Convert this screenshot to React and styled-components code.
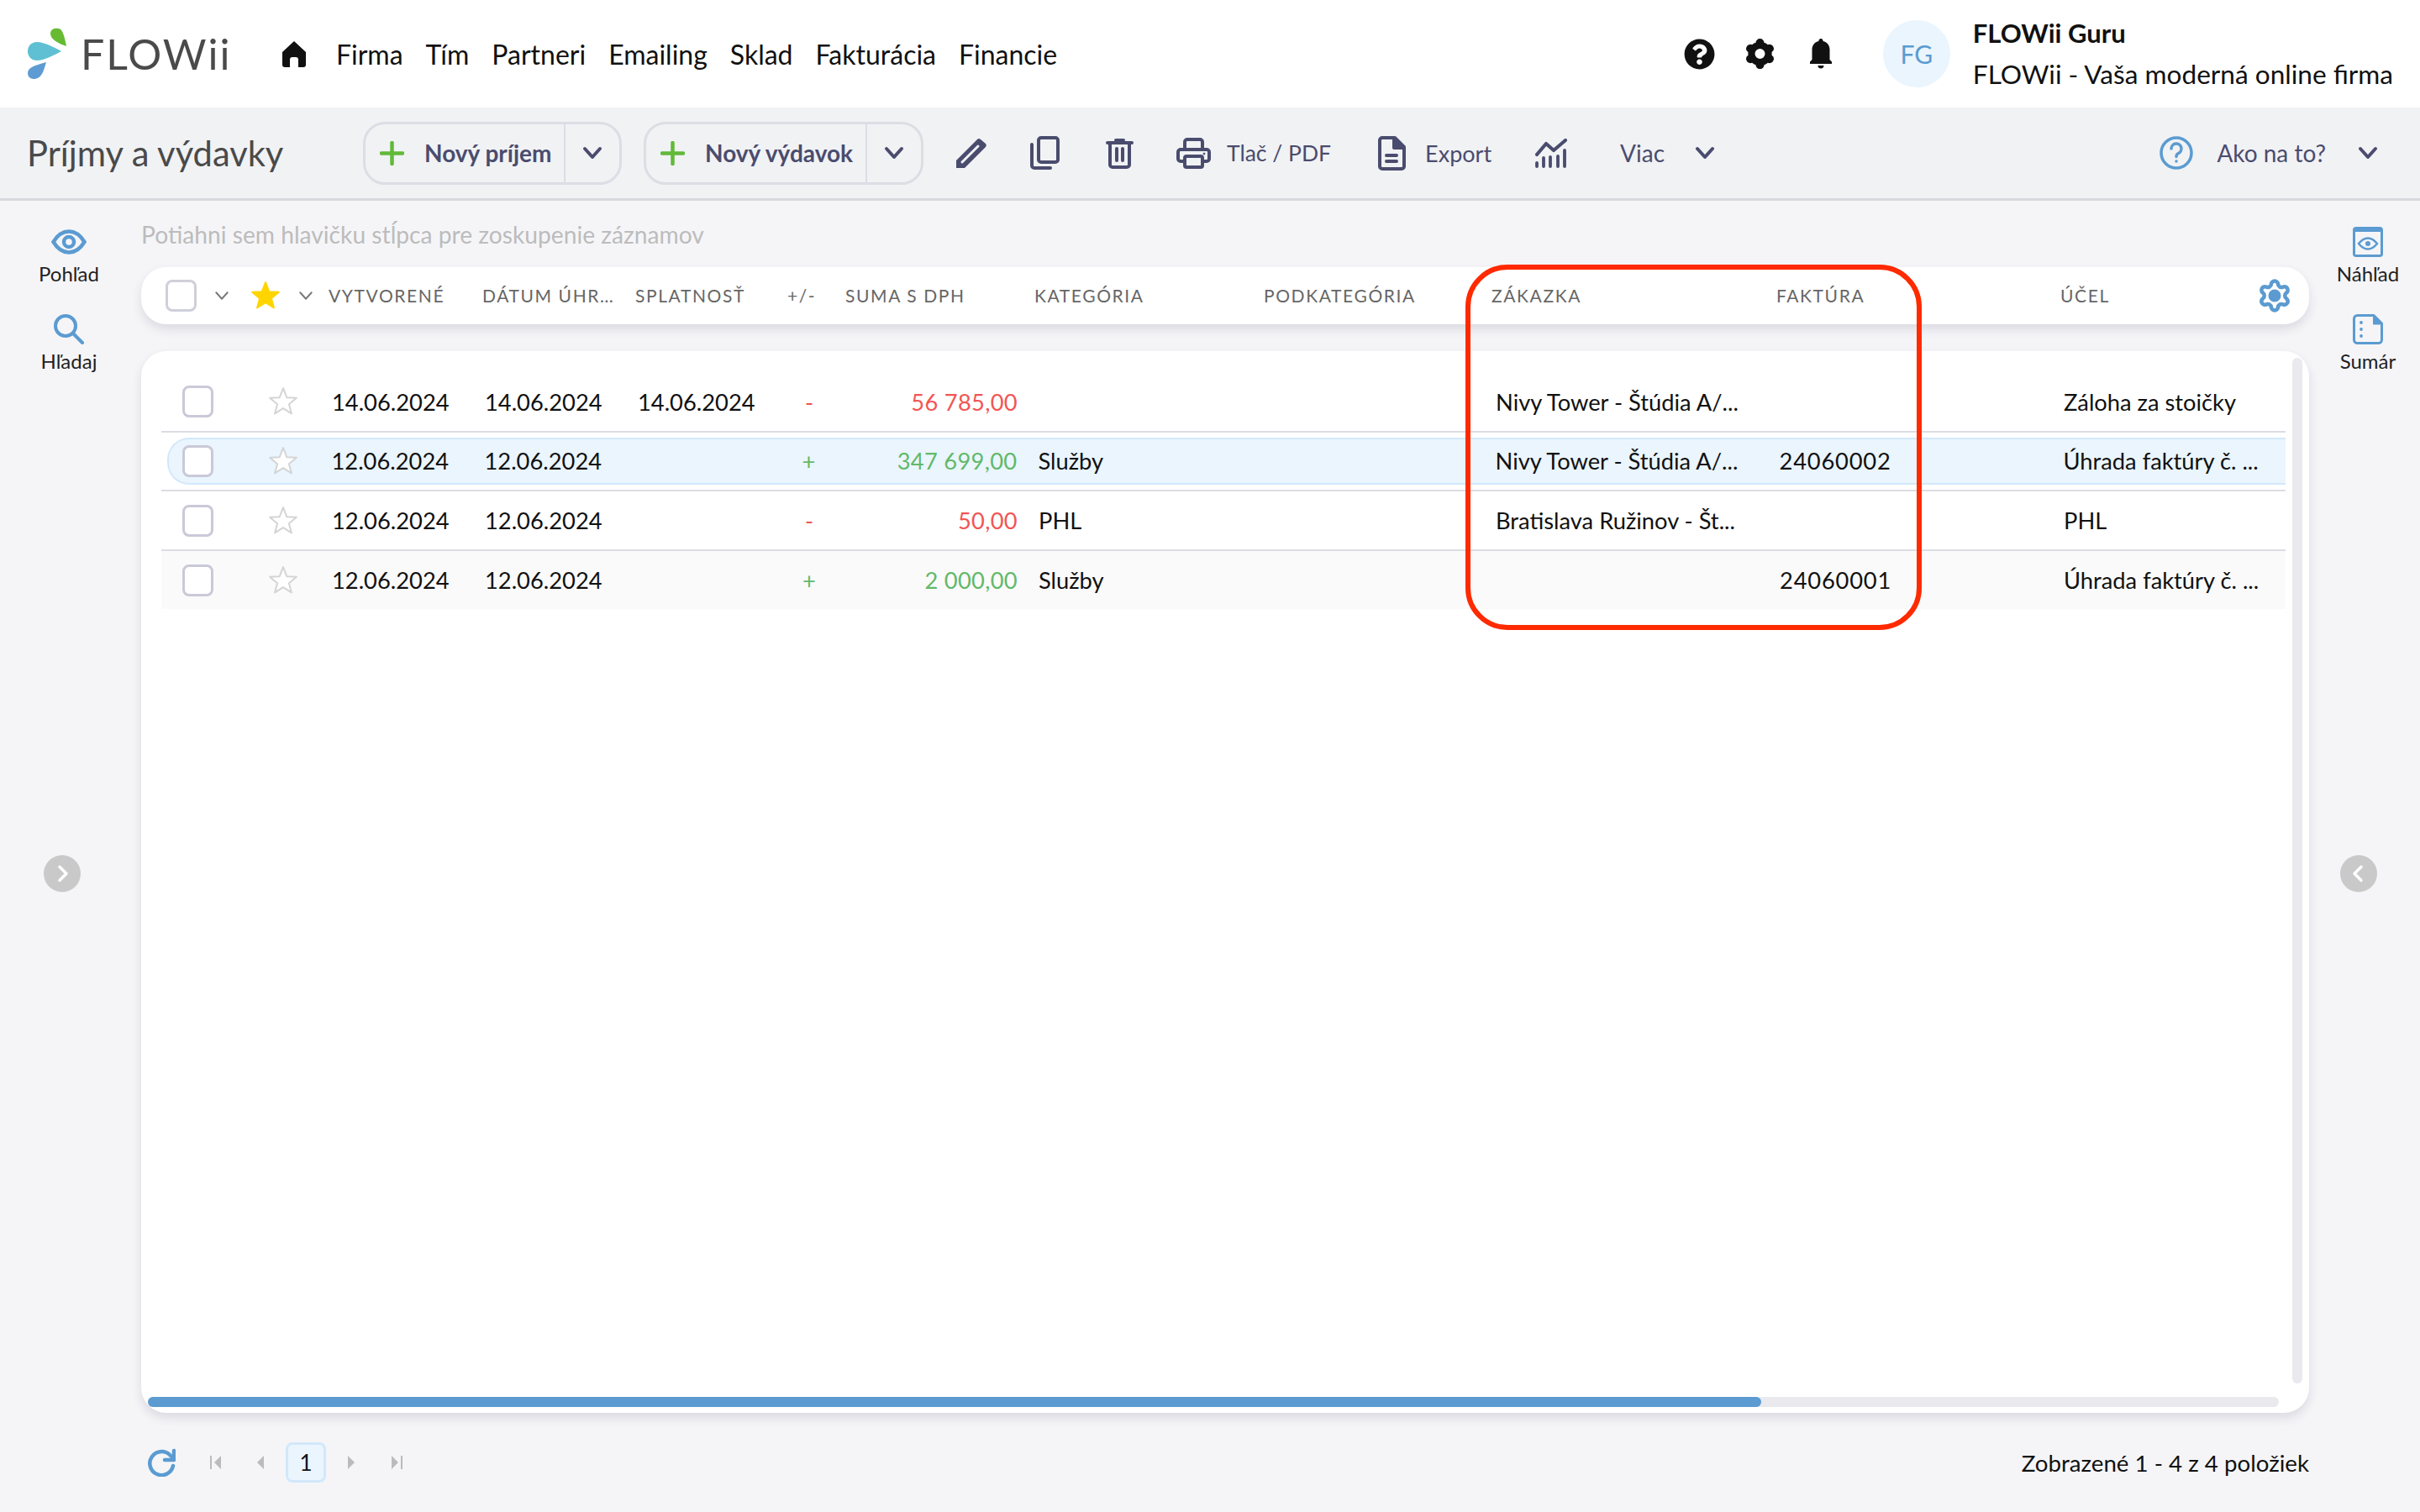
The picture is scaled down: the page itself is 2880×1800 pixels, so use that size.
import React from 'react'
import styled, { createGlobalStyle } from 'styled-components'
import { FaQuestionCircle } from 'react-icons/fa'
import { Settings } from 'lucide-react'

const INK = '#4a4c6e'
const BLUE = '#5b9bd1'

const Global = createGlobalStyle`
  html, body { margin: 0; padding: 0; background: #f5f5f8; }
  body { font-family: Lato, "Open Sans", sans-serif; color: #111; }
  * { box-sizing: border-box; }
  svg { display: block; }
`

const Page = styled.div`
  width: 2880px;
  height: 1800px;
  position: relative;
  overflow: hidden;
  display: flex;
  flex-direction: column;
`

/* top bar */
const TopBar = styled.header`
  height: 128px;
  background: #fff;
  display: flex;
  align-items: center;
  padding-right: 32px;
`
const Brand = styled.div`
  width: 335px;
  display: flex;
  align-items: center;
  padding-left: 33px;
`
const Wordmark = styled.span`
  font-size: 50px;
  font-weight: 400;
  letter-spacing: 2px;
  color: #4a4a4a;
  margin-left: 15px;
  line-height: 1;
`
const Nav = styled.nav`
  display: flex;
  align-items: center;
  gap: 27px;
  margin-left: 35px;
  font-size: 32px;
  color: #111;
`
const TopRight = styled.div`
  margin-left: auto;
  display: flex;
  align-items: center;
`
const TopIcon = styled.span`
  display: flex;
  font-size: 37px;
  color: #111;
  margin-left: ${p => p.$gap}px;
`
const Avatar = styled.div`
  width: 80px;
  height: 80px;
  border-radius: 50%;
  background: #eaf5fe;
  color: ${BLUE};
  font-size: 30px;
  display: flex;
  align-items: center;
  justify-content: center;
  margin-left: 60px;
  margin-right: 27px;
`
const UserBox = styled.div`
  display: flex;
  flex-direction: column;
  gap: 17px;
  font-size: 31.600px;
  line-height: 32px;
  margin-top: -2px;
`
const UserName = styled.div`
  font-weight: 700;
  font-size: 31px;
`

/* toolbar */
const Toolbar = styled.div`
  height: 111px;
  background: #f1f2f4;
  border-bottom: 3px solid #d8d9dd;
  display: flex;
  align-items: center;
  padding-right: 50px;
  color: ${INK};
  font-size: 28px;
`
const PageTitle = styled.h1`
  width: 432px;
  margin: 0;
  padding-left: 32px;
  font-size: 41.700px;
  font-weight: 400;
  color: #4a4a4a;
`
const SplitButton = styled.div`
  height: 75px;
  width: ${p => p.$width}px;
  margin-left: ${p => p.$gap || 0}px;
  border: 3px solid #dcdde5;
  border-radius: 26px;
  display: flex;
  align-items: center;
`
const SplitMain = styled.div`
  flex: 1;
  height: 100%;
  display: flex;
  align-items: center;
  gap: 24px;
  padding-left: 17px;
  font-weight: 700;
  font-size: 28px;
  color: ${INK};
`
const SplitArrow = styled.div`
  width: 66px;
  height: 100%;
  border-left: 2px solid #dcdde5;
  display: flex;
  align-items: center;
  justify-content: center;
`
const ToolItem = styled.div`
  display: flex;
  align-items: center;
  margin-left: ${p => p.$gap}px;
  font-size: ${p => p.$size || 28}px;
  ${p => p.$push && 'margin-left: auto;'}
`

/* main columns */
const Body = styled.div`
  flex: 1;
  display: grid;
  grid-template-columns: 168px 2580px 132px;
  min-height: 0;
`
const Rail = styled.aside`
  display: flex;
  flex-direction: column;
  align-items: center;
  padding-top: 31px;
  padding-left: ${p => p.$left || 0}px;
  padding-right: ${p => p.$right || 0}px;
`
const RailItem = styled.div`
  height: 104px;
  display: flex;
  flex-direction: column;
  align-items: center;
  font-size: 24px;
  line-height: 30px;
  color: #222;
`
const RailIcon = styled.div`
  height: 36px;
  margin-bottom: 5px;
  display: flex;
  align-items: center;
`
const RailToggle = styled.div`
  width: 44px;
  height: 44px;
  border-radius: 50%;
  background: #c9c9c9;
  display: flex;
  align-items: center;
  justify-content: center;
  margin-top: 540px;
  align-self: flex-start;
  margin-left: ${p => p.$offset}px;
`
const Center = styled.main`
  display: flex;
  flex-direction: column;
  padding-top: 20px;
  min-height: 0;
`
const GroupHint = styled.div`
  height: 40px;
  line-height: 40px;
  font-size: 28.200px;
  color: #bcbcbc;
  margin-bottom: 19px;
`
const HeadCard = styled.div`
  height: 68px;
  background: #fff;
  border-radius: 30px;
  box-shadow: 0 6px 12px rgba(60, 60, 90, 0.14);
  display: grid;
  grid-template-columns: 87px 43px 57px 36px 183px 182px 181px 69px 225px 273px 271px 339px 338px 234px 62px;
  align-items: center;
  margin-bottom: 32px;
`
const HeadCell = styled.div`
  font-size: 21px;
  letter-spacing: 1.600px;
  color: #666;
  white-space: nowrap;
  padding-left: ${p => p.$pad || 0}px;
  display: flex;
  align-items: center;
`
const TableCard = styled.div`
  position: relative;
  height: 1265px;
  background: #fff;
  border-radius: 30px;
  box-shadow: 0 6px 12px rgba(60, 60, 90, 0.14);
  padding: 26px 28px 0 24px;
`
const Row = styled.div`
  height: ${p => (p.$last ? '69px' : '70.7px')};
  padding: 6px 0;
  background: ${p => (p.$striped ? '#fafafa' : 'transparent')};
  border-bottom: ${p => (p.$last ? 'none' : '2.5px solid #dcdde3')};
`
const RowBody = styled.div`
  height: 100%;
  margin-left: 7px;
  display: grid;
  grid-template-columns: ${p => (p.$active ? '117.5px' : '120px')} 76px 182px 182px 170px 68px 214px 299px 270px 338px 338px 264px;
  align-items: center;
  font-size: 27.300px;
  white-space: nowrap;
  ${p => p.$active && `
    background: #eaf5fe;
    border: 2.5px solid #d2e8fb;
    border-right: none;
    border-radius: 26px 0 0 26px;
  `}
`
const Cell = styled.div`
  color: ${p => p.$color || '#111'};
  text-align: ${p => p.$align || 'left'};
  padding-left: ${p => p.$pad || 0}px;
  letter-spacing: ${p => p.$track || 0}px;
`
const CheckBox = styled.div`
  width: 37px;
  height: 38px;
  border: 3px solid ${p => p.$head ? '#cfd0da' : '#c9c9d8'};
  border-radius: 8px;
  background: #fff;
  margin-left: ${p => p.$pad || 0}px;
`
const GearIcon = styled(Settings)`
  color: ${BLUE};
  circle { fill: currentColor; }
`
const ScrollY = styled.div`
  position: absolute;
  right: 8px;
  top: 8px;
  bottom: 35px;
  width: 12px;
  border-radius: 6px;
  background: #e9e9ee;
`
const ScrollX = styled.div`
  position: absolute;
  left: 8px;
  right: 36px;
  bottom: 7px;
  height: 12px;
  border-radius: 6px;
  background: #e9e9ee;
`
const ScrollThumb = styled.div`
  height: 100%;
  border-radius: 6px;
  background: ${BLUE};
`
const Footer = styled.div`
  height: 118px;
  display: flex;
  align-items: center;
  padding-left: 7px;
`
const Pager = styled.div`
  display: flex;
  align-items: center;
  margin-left: ${p => p.$gap}px;
`
const PageNo = styled.div`
  width: 48px;
  height: 48px;
  border: 3px solid #d2e8fb;
  border-radius: 8px;
  background: #eaf5fe;
  font-size: 26px;
  display: flex;
  align-items: center;
  justify-content: center;
  margin-left: ${p => p.$gap}px;
`
const ItemCount = styled.div`
  margin-left: auto;
  font-size: 27.700px;
  color: #111;
`
const CalloutFrame = styled.div`
  position: absolute;
  left: 1744px;
  top: 315px;
  width: 543px;
  height: 435px;
  border: 6px solid #ff2a00;
  border-radius: 50px;
  pointer-events: none;
`

const Logo = () => (
  <svg width="48" height="62" viewBox="33 33 48 62">
    <path fill="#66bb33" d="M79 55C70 52 60 47 60 40C60 34 66 33 70 34C74 35 76 40 79 55Z" />
    <path fill="#5fc0d3" d="M73 61C62 67 52 72 44 72C37 72 33 67 33 61C33 55 37 50 44 50C52 50 62 55 73 61Z" />
    <path fill="#5f9bd3" d="M55 74C52 84 50 94 40 94C35 94 33 90 33 87C33 81 40 78 55 74Z" />
  </svg>
)
const HomeIcon = () => (
  <svg width="30" height="31" viewBox="0 0 30 31">
    <path fill="#111" d="M15 0L29 13V28a3 3 0 0 1-3 3H20V22a3 3 0 0 0-3-3H13a3 3 0 0 0-3 3V31H4a3 3 0 0 1-3-3V13Z" />
  </svg>
)
const CogIcon = () => (
  <svg width="35" height="36" viewBox="0 0 35 36" fill="#111">
    <path fillRule="evenodd" d="M17.500 0a5 5 0 0 1 5 4.800c2 .7 3 1.300 4.300 2.500a5 5 0 0 1 6.700 2.700 5 5 0 0 1-2 6.200c.2 1.800.2 2.800 0 3.600a5 5 0 0 1 2 6.200 5 5 0 0 1-6.700 2.700c-1.300 1.200-2.300 1.800-4.300 2.500a5 5 0 0 1-10 0c-2-.7-3-1.300-4.300-2.500a5 5 0 0 1-6.700-2.700 5 5 0 0 1 2-6.200c-.2-.8-.2-1.800 0-3.600a5 5 0 0 1-2-6.200 5 5 0 0 1 6.700-2.700c1.300-1.200 2.300-1.800 4.300-2.500a5 5 0 0 1 5-4.800ZM17.500 12a6 6 0 1 0 0 12 6 6 0 0 0 0-12Z" />
  </svg>
)
const BellIcon = () => (
  <svg width="28" height="36" viewBox="0 0 28 36" fill="#111">
    <path d="M14 0a2.500 2.500 0 0 1 2.500 3C21.500 4.200 24.500 8 24.500 13V25L27 27.500V30H1V27.500L3.500 25V13C3.500 8 6.500 4.200 11.500 3A2.500 2.500 0 0 1 14 0Z" />
    <path d="M10.500 32H17.500a3.500 3.500 0 0 1-7 0Z" />
  </svg>
)
const Plus = () => (
  <svg width="29" height="29" viewBox="0 0 29 29">
    <path stroke="#62b93a" strokeWidth="4.500" strokeLinecap="round" d="M14.500 2V27M2 14.500H27" />
  </svg>
)
const Chevron = ({ size = 24, color = INK, width = 4 }) => (
  <svg width={size} height={size} viewBox="0 0 24 24" fill="none">
    <path stroke={color} strokeWidth={width} strokeLinecap="round" strokeLinejoin="round" d="M3 7L12 17L21 7" />
  </svg>
)
const PencilIcon = () => (
  <svg width="38" height="37" viewBox="0 0 38 37">
    <path fill={INK} d="M1 36V27L26 2a3 3 0 0 1 4 0l6 5a3 3 0 0 1 0 4L11 36Z" />
    <path stroke="#f1f2f4" strokeWidth="3" strokeLinecap="round" d="M8 29L27 10" />
  </svg>
)
const CopyIcon = () => (
  <svg width="35" height="40" viewBox="0 0 35 40" fill="none" stroke={INK} strokeWidth="4" strokeLinecap="round" strokeLinejoin="round">
    <rect x="10" y="2" width="23" height="29" rx="3" />
    <path d="M2 10V35a3 3 0 0 0 3 3H24" />
  </svg>
)
const TrashIcon = () => (
  <svg width="33" height="37" viewBox="0 0 33 37" fill="none" stroke={INK} strokeWidth="4" strokeLinecap="round" strokeLinejoin="round">
    <path d="M2 6H31M12 3H21M5 6V32a3 3 0 0 0 3 3H25a3 3 0 0 0 3-3V6M13 13V27M20 13V27" />
  </svg>
)
const PrinterIcon = () => (
  <svg width="41" height="37" viewBox="0 0 41 37" fill="none" stroke={INK} strokeWidth="4" strokeLinejoin="round">
    <path d="M10 14V5a3 3 0 0 1 3-3H28a3 3 0 0 1 3 3V14" />
    <path d="M10 28H5a3 3 0 0 1-3-3V17a3 3 0 0 1 3-3H36a3 3 0 0 1 3 3V25a3 3 0 0 1-3 3H31" />
    <rect x="10" y="22" width="21" height="13" rx="2" />
    <circle cx="33" cy="19" r="1" fill={INK} strokeWidth="1" />
  </svg>
)
const FileIcon = () => (
  <svg width="33" height="41" viewBox="0 0 33 41" fill="none" stroke={INK} strokeWidth="4" strokeLinejoin="round" strokeLinecap="round">
    <path d="M20 2H5a3 3 0 0 0-3 3V36a3 3 0 0 0 3 3H28a3 3 0 0 0 3-3V13Z" />
    <path d="M19 3V14H30" fill={INK} />
    <path d="M10 23H22M10 30H22" />
  </svg>
)
const ChartIcon = () => (
  <svg width="38" height="35" viewBox="0 0 38 35" fill="none" stroke={INK} strokeLinecap="round" strokeLinejoin="round">
    <path strokeWidth="4.200" d="M2 19L13 6L22 14L36 2" />
    <path strokeWidth="3.800" d="M2 29V33M10 23V33M18 22V33M27 21V33M35 14V33" />
  </svg>
)
const HelpIcon = () => (
  <svg width="40" height="40" viewBox="0 0 40 40" fill="none" stroke={BLUE} strokeWidth="3.500" strokeLinecap="round">
    <circle cx="20" cy="20" r="18" />
    <path d="M14 15a6 6 0 1 1 8.500 5.500c-1.800.9-2.500 2-2.500 4" />
    <circle cx="20" cy="30" r="1" fill={BLUE} strokeWidth="1.500" />
  </svg>
)
const EyeIcon = () => (
  <svg width="42" height="30" viewBox="0 0 42 30" fill="none" stroke={BLUE} strokeWidth="4.500">
    <path d="M2.500 15C8 6 14 2.500 21 2.500S34 6 39.500 15C34 24 28 27.500 21 27.500S8 24 2.500 15Z" />
    <circle cx="21" cy="15" r="6" />
  </svg>
)
const SearchIcon = () => (
  <svg width="36" height="36" viewBox="0 0 36 36" fill="none" stroke={BLUE} strokeWidth="4" strokeLinecap="round">
    <circle cx="14" cy="14" r="12" />
    <path d="M23 23L34 34" />
  </svg>
)
const PreviewIcon = () => (
  <svg width="36" height="36" viewBox="0 0 36 36">
    <rect width="36" height="36" rx="4" fill={BLUE} />
    <rect x="3" y="6" width="30" height="27" fill="#f5f5f8" />
    <path d="M7 20C11 15 14.500 13.500 18 13.500S25 15 29 20C25 25 21.500 26.500 18 26.500S11 25 7 20Z" fill="none" stroke={BLUE} strokeWidth="2.500" />
    <circle cx="18" cy="20" r="3" fill={BLUE} />
  </svg>
)
const SummaryIcon = () => (
  <svg width="36" height="36" viewBox="0 0 36 36">
    <path d="M1.500 5.500a4 4 0 0 1 4-4H25L34.500 11V30.500a4 4 0 0 1-4 4H5.500a4 4 0 0 1-4-4Z" fill="#f5f5f8" stroke={BLUE} strokeWidth="3" strokeLinejoin="round" />
    <path d="M25 2L34 11.500H25Z" fill={BLUE} stroke={BLUE} strokeWidth="2" strokeLinejoin="round" />
    <circle cx="10" cy="10" r="1.900" fill={BLUE} />
    <circle cx="10" cy="18" r="1.900" fill={BLUE} />
    <circle cx="10" cy="26" r="1.900" fill={BLUE} />
  </svg>
)
const Star = ({ filled, size = 36 }) => (
  <svg width={size} height={size} viewBox="0 0 24 25">
    <path
      d="M12 1.500L15 9.200L23 9.600L16.800 14.700L18.900 22.500L12 18.100L5.100 22.500L7.200 14.700L1 9.600L9 9.200Z"
      fill={filled ? '#ffd500' : '#fff'}
      stroke={filled ? '#ffd500' : '#d4d4d4'}
      strokeWidth="1.400"
      strokeLinejoin="round"
    />
  </svg>
)
const ToggleArrow = ({ left }) => (
  <svg width="24" height="24" viewBox="0 0 24 24" fill="none">
    <path stroke="#fff" strokeWidth="3.500" strokeLinecap="round" strokeLinejoin="round" d={left ? 'M15 4L7 12L15 20' : 'M9 4L17 12L9 20'} />
  </svg>
)
const RefreshIcon = () => (
  <svg width="34" height="34" viewBox="0 0 34 34" fill="none" stroke={BLUE} strokeWidth="4.500" strokeLinecap="round" strokeLinejoin="round">
    <path d="M31 21a14 14 0 1 1-4-13L32 13" />
    <path d="M32 3V14H21" />
  </svg>
)
const PagerArrow = ({ dir, bar }) => (
  <svg width="14" height="18" viewBox="0 0 14 18" style={dir === 'left' ? undefined : { transform: 'scaleX(-1)' }}>
    <path fill="#bbb" d={bar ? 'M13 1V17L5 9Z' : 'M11 1V17L3 9Z'} />
    {bar && <rect x="0" y="1" width="2" height="16" fill="#bbb" />}
  </svg>
)

const rows = [
  { created: '14.06.2024', paid: '14.06.2024', due: '14.06.2024', sign: '-', sum: '56 785,00', cat: '', job: 'Nivy Tower - Štúdia A/...', inv: '', note: 'Záloha za stoičky' },
  { created: '12.06.2024', paid: '12.06.2024', due: '', sign: '+', sum: '347 699,00', cat: 'Služby', job: 'Nivy Tower - Štúdia A/...', inv: '24060002', note: 'Úhrada faktúry č. ...', active: true },
  { created: '12.06.2024', paid: '12.06.2024', due: '', sign: '-', sum: '50,00', cat: 'PHL', job: 'Bratislava Ružinov - Št...', inv: '', note: 'PHL' },
  { created: '12.06.2024', paid: '12.06.2024', due: '', sign: '+', sum: '2 000,00', cat: 'Služby', job: '', inv: '24060001', note: 'Úhrada faktúry č. ...', striped: true, last: true },
]
const heads = ['VYTVORENÉ', 'DÁTUM ÚHR…', 'SPLATNOSŤ', '+/-', 'SUMA S DPH', 'KATEGÓRIA', 'PODKATEGÓRIA', 'ZÁKAZKA', 'FAKTÚRA', 'ÚČEL']
const navLinks = ['Firma', 'Tím', 'Partneri', 'Emailing', 'Sklad', 'Fakturácia', 'Financie']

export default function App() {
  return (
    <Page>
      <Global />
      <TopBar>
        <Brand>
          <Logo />
          <Wordmark>FLOWii</Wordmark>
        </Brand>
        <HomeIcon />
        <Nav>
          {navLinks.map(n => <span key={n}>{n}</span>)}
        </Nav>
        <TopRight>
          <TopIcon $gap={0}><FaQuestionCircle /></TopIcon>
          <TopIcon $gap={36}><CogIcon /></TopIcon>
          <TopIcon $gap={41}><BellIcon /></TopIcon>
          <Avatar>FG</Avatar>
          <UserBox>
            <UserName>FLOWii Guru</UserName>
            <div>FLOWii - Vaša moderná online firma</div>
          </UserBox>
        </TopRight>
      </TopBar>

      <Toolbar>
        <PageTitle>Príjmy a výdavky</PageTitle>
        <SplitButton $width={308}>
          <SplitMain><Plus />Nový príjem</SplitMain>
          <SplitArrow><Chevron /></SplitArrow>
        </SplitButton>
        <SplitButton $width={333} $gap={26}>
          <SplitMain><Plus />Nový výdavok</SplitMain>
          <SplitArrow><Chevron /></SplitArrow>
        </SplitButton>
        <ToolItem $gap={38}><PencilIcon /></ToolItem>
        <ToolItem $gap={51}><CopyIcon /></ToolItem>
        <ToolItem $gap={55}><TrashIcon /></ToolItem>
        <ToolItem $gap={51}><PrinterIcon /></ToolItem>
        <ToolItem $gap={19} $size={26.500}>Tlač / PDF</ToolItem>
        <ToolItem $gap={56}><FileIcon /></ToolItem>
        <ToolItem $gap={23} $size={27}>Export</ToolItem>
        <ToolItem $gap={52}><ChartIcon /></ToolItem>
        <ToolItem $gap={63}>Viac</ToolItem>
        <ToolItem $gap={36}><Chevron /></ToolItem>
        <ToolItem $push><HelpIcon /></ToolItem>
        <ToolItem $gap={28}>Ako na to?</ToolItem>
        <ToolItem $gap={38}><Chevron /></ToolItem>
      </Toolbar>

      <Body>
        <Rail $right={4}>
          <RailItem><RailIcon><EyeIcon /></RailIcon>Pohľad</RailItem>
          <RailItem><RailIcon><SearchIcon /></RailIcon>Hľadaj</RailItem>
          <RailToggle $offset={52}><ToggleArrow /></RailToggle>
        </Rail>

        <Center>
          <GroupHint>Potiahni sem hlavičku stĺpca pre zoskupenie záznamov</GroupHint>
          <HeadCard>
            <HeadCell $pad={29}><CheckBox $head /></HeadCell>
            <HeadCell><Chevron size={18} color="#777" width={2.500} /></HeadCell>
            <HeadCell><Star filled /></HeadCell>
            <HeadCell><Chevron size={18} color="#777" width={2.500} /></HeadCell>
            {heads.map(h => <HeadCell key={h}>{h}</HeadCell>)}
            <HeadCell><GearIcon size={42} strokeWidth={2.600} /></HeadCell>
          </HeadCard>

          <TableCard>
            {rows.map((r, i) => (
              <Row key={i} $striped={r.striped} $last={r.last}>
                <RowBody $active={r.active}>
                  <Cell $pad={r.active ? 15.500 : 18}><CheckBox /></Cell>
                  <Cell><Star /></Cell>
                  <Cell>{r.created}</Cell>
                  <Cell>{r.paid}</Cell>
                  <Cell>{r.due}</Cell>
                  <Cell $align="center" $color={r.sign === '+' ? '#62b96a' : '#f25555'}>{r.sign}</Cell>
                  <Cell $align="right" $track={0.300} $color={r.sign === '+' ? '#62b96a' : '#f25555'}>{r.sum}</Cell>
                  <Cell $pad={25}>{r.cat}</Cell>
                  <Cell />
                  <Cell>{r.job}</Cell>
                  <Cell $track={0.800}>{r.inv}</Cell>
                  <Cell>{r.note}</Cell>
                </RowBody>
              </Row>
            ))}
            <ScrollY />
            <ScrollX><ScrollThumb style={{ width: `${(1920 / 2536) * 100}%` }} /></ScrollX>
          </TableCard>

          <Footer>
            <RefreshIcon />
            <Pager $gap={41}><PagerArrow dir="left" bar /></Pager>
            <Pager $gap={39}><PagerArrow dir="left" /></Pager>
            <PageNo $gap={23}>1</PageNo>
            <Pager $gap={23}><PagerArrow dir="right" /></Pager>
            <Pager $gap={40}><PagerArrow dir="right" bar /></Pager>
            <ItemCount>Zobrazené 1 - 4 z 4 položiek</ItemCount>
          </Footer>
        </Center>

        <Rail $left={8}>
          <RailItem><RailIcon><PreviewIcon /></RailIcon>Náhľad</RailItem>
          <RailItem><RailIcon><SummaryIcon /></RailIcon>Sumár</RailItem>
          <RailToggle $offset={29}><ToggleArrow left /></RailToggle>
        </Rail>
      </Body>

      <CalloutFrame />
    </Page>
  )
}
